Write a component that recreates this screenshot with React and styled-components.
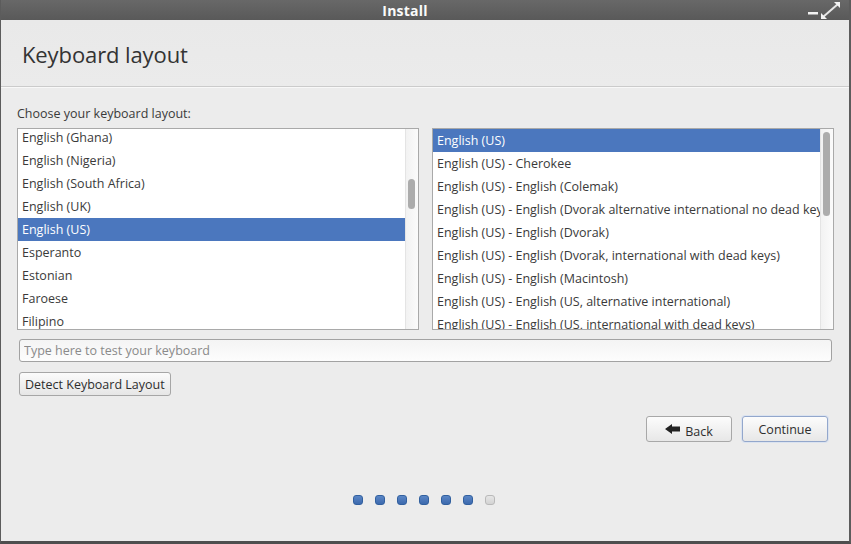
import React from 'react';
import styled, { createGlobalStyle } from 'styled-components';

const GlobalStyle = createGlobalStyle`
  html, body {
    margin: 0;
    padding: 0;
    background: #ececec;
  }
  body {
    font-family: 'Open Sans', 'DejaVu Sans', sans-serif;
  }
`;

const layouts = [
  'English (Ghana)',
  'English (Nigeria)',
  'English (South Africa)',
  'English (UK)',
  'English (US)',
  'Esperanto',
  'Estonian',
  'Faroese',
  'Filipino',
];

const variants = [
  'English (US)',
  'English (US) - Cherokee',
  'English (US) - English (Colemak)',
  'English (US) - English (Dvorak alternative international no dead keys)',
  'English (US) - English (Dvorak)',
  'English (US) - English (Dvorak, international with dead keys)',
  'English (US) - English (Macintosh)',
  'English (US) - English (US, alternative international)',
  'English (US) - English (US, international with dead keys)',
];

const App = () => {
  return (
    <Window>
      <GlobalStyle />
      <TitleBar>
        <h1>Install</h1>
        <WindowControls>
          <svg width="36" height="20" viewBox="0 0 36 20">
            <rect x="1" y="12" width="10" height="2.5" fill="#f2f2f2" />
            <path d="M16 17 L31 4" stroke="#e6e6e6" strokeWidth="2" />
            <path d="M27 2 L33 2 L33 8 Z" fill="#f2f2f2" />
            <path d="M14 13 L14 19 L20 19 Z" fill="#f2f2f2" />
          </svg>
        </WindowControls>
      </TitleBar>

      <Header>
        <h2>Keyboard layout</h2>
      </Header>

      <Content>
        <Label>Choose your keyboard layout:</Label>
        <Lists>
          <ListBox>
            <Rows $offset={-3}>
              {layouts.map((name) => (
                <Row key={name} $selected={name === 'English (US)'}>
                  {name}
                </Row>
              ))}
            </Rows>
            <ScrollTrack>
              <Thumb $top={50} $height={30} />
            </ScrollTrack>
          </ListBox>
          <ListBox>
            <Rows $offset={0}>
              {variants.map((name, i) => (
                <Row key={name} $selected={i === 0}>
                  {name}
                </Row>
              ))}
            </Rows>
            <ScrollTrack>
              <Thumb $top={3} $height={84} />
            </ScrollTrack>
          </ListBox>
        </Lists>

        <TestInput placeholder="Type here to test your keyboard" />

        <div>
          <Button>Detect Keyboard Layout</Button>
        </div>

        <Actions>
          <NavButton>
            <svg width="16" height="10" viewBox="0 0 16 10">
              <path d="M0 5 L7 0 L7 2.5 L15 2.5 L15 7.5 L7 7.5 L7 10 Z" fill="#222" />
            </svg>
            <span className="low">Back</span>
          </NavButton>
          <NavButton $focused>Continue</NavButton>
        </Actions>
      </Content>

      <Steps>
        {[0, 1, 2, 3, 4, 5, 6].map((i) => (
          <Dot key={i} $done={i < 6} />
        ))}
      </Steps>
    </Window>
  );
};

export default App;

const Window = styled.div`
  width: 851px;
  height: 544px;
  box-sizing: border-box;
  display: flex;
  flex-direction: column;
  background: #ececec;
  border-left: 1px solid #5c5c5c;
  border-right: 2px solid #5c5c5c;
  border-bottom: 3px solid #4e4e4e;
  overflow: hidden;
  color: #3a3a3a;
`;

const TitleBar = styled.div`
  height: 20px;
  flex: none;
  position: relative;
  display: flex;
  align-items: center;
  justify-content: center;
  background: linear-gradient(#686868, #595959);
  padding-right: 40px;

  h1 {
    margin: 0;
    font-size: 14px;
    font-weight: 700;
    color: #fafafa;
    letter-spacing: 0.2px;
  }
`;

const WindowControls = styled.div`
  position: absolute;
  right: 6px;
  top: 0;
  height: 20px;

  svg {
    display: block;
  }
`;

const Header = styled.div`
  height: 67px;
  flex: none;
  display: flex;
  align-items: center;
  padding: 2px 0 0 21px;
  box-sizing: border-box;
  border-bottom: 1px solid #cbcbcb;
  box-shadow: 0 1px 0 #f8f8f8;
  background: linear-gradient(#e9e9e9, #ebebeb);

  h2 {
    margin: 0;
    font-size: 22px;
    font-weight: 400;
    letter-spacing: -0.1px;
    color: #333;
  }
`;

const Content = styled.div`
  display: flex;
  flex-direction: column;
  padding: 18px 15px 0 16px;
`;

const Label = styled.div`
  font-size: 12.5px;
  line-height: 17px;
  color: #3a3a3a;
  margin-bottom: 6px;
`;

const Lists = styled.div`
  display: grid;
  grid-template-columns: 1fr 1fr;
  gap: 13px;
`;

const ListBox = styled.div`
  height: 202px;
  box-sizing: border-box;
  border: 1px solid #a9a9a9;
  background: #fff;
  display: flex;
  overflow: hidden;
`;

const Rows = styled.div`
  flex: 1;
  min-width: 0;
  overflow: hidden;
  margin-top: ${(p) => p.$offset}px;
`;

const Row = styled.div`
  height: 23px;
  line-height: 23px;
  padding-left: 4px;
  font-size: 12.5px;
  white-space: nowrap;
  overflow: hidden;
  color: ${(p) => (p.$selected ? '#fff' : '#3a3a3a')};
  background: ${(p) => (p.$selected ? '#4b77be' : 'transparent')};
`;

const ScrollTrack = styled.div`
  width: 12px;
  flex: none;
  position: relative;
  border-left: 1px solid #e4e4e4;
  background: linear-gradient(90deg, #f2f2f2, #fbfbfb);
`;

const Thumb = styled.div`
  position: absolute;
  left: 2px;
  width: 7px;
  top: ${(p) => p.$top}px;
  height: ${(p) => p.$height}px;
  border-radius: 4px;
  background: #acacac;
`;

const TestInput = styled.input`
  margin: 9px 2px 0 2px;
  height: 23px;
  box-sizing: border-box;
  border: 1px solid #a2a2a2;
  border-radius: 3px;
  background: linear-gradient(#f4f4f4, #fdfdfd);
  padding: 0 4px;
  font-family: 'Open Sans', sans-serif;
  font-size: 12.5px;
  outline: none;

  &::placeholder {
    color: #8a8a8a;
  }
`;

const Button = styled.button`
  margin: 10px 0 0 2px;
  height: 24px;
  padding: 0 5px;
  box-sizing: border-box;
  border: 1px solid #a6a6a6;
  border-radius: 3px;
  background: linear-gradient(#fbfbfb, #e6e6e6);
  font-family: 'Open Sans', sans-serif;
  font-size: 12.5px;
  color: #2e2e2e;
`;

const Actions = styled.div`
  display: flex;
  justify-content: flex-end;
  gap: 10px;
  margin: 20px 6px 0 0;
`;

const NavButton = styled.button`
  width: 86px;
  height: 26px;
  box-sizing: border-box;
  display: flex;
  align-items: center;
  justify-content: center;
  gap: 4px;
  border: 1px solid ${(p) => (p.$focused ? '#93a7cc' : '#a8a8a8')};
  border-radius: 3px;
  background: linear-gradient(#fcfcfc, #e7e7e7);
  box-shadow: ${(p) => (p.$focused ? '0 0 0 1px #dbe3f0' : 'none')};
  font-family: 'Open Sans', sans-serif;
  font-size: 12.5px;
  color: #2e2e2e;

  .low {
    padding-top: 5px;
  }
`;

const Steps = styled.div`
  display: flex;
  justify-content: center;
  gap: 12px;
  margin-top: 53px;
  padding-right: 2px;
`;

const Dot = styled.div`
  width: 10px;
  height: 10px;
  box-sizing: border-box;
  border-radius: 3px;
  border: 1px solid ${(p) => (p.$done ? '#31609f' : '#b9b9b9')};
  background: ${(p) =>
    p.$done ? 'linear-gradient(#5a86c6, #3c69ad)' : 'linear-gradient(#e6e6e6, #d3d3d3)'};
`;
